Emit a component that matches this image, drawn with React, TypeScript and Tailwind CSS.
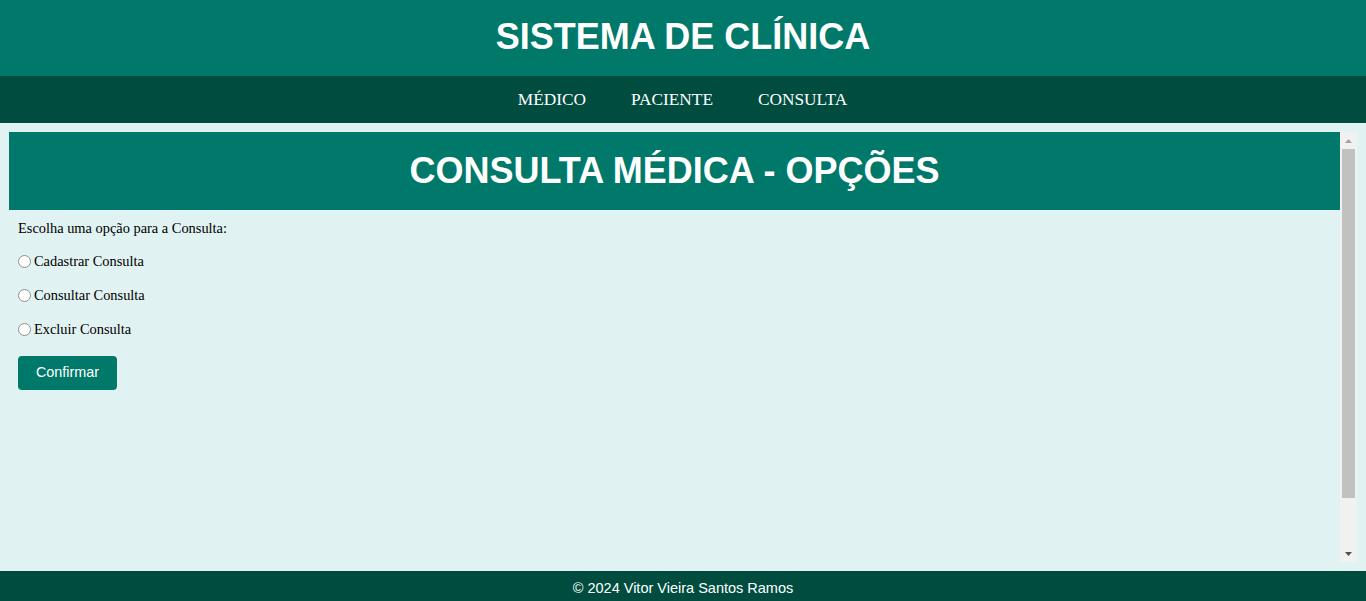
import React from 'react'

const serif = { fontFamily: '"Liberation Serif", "Times New Roman", serif' }

function Opcao({ label }: { label: string }) {
    return (
        <label className="flex items-center h-[20px] text-[14.4px] text-black">
            <span className="w-[13px] h-[13px] rounded-full border border-[#8f8f8f] bg-white mr-[3px] box-border mt-[-2px]" />
            <span>{label}</span>
        </label>
    )
}

function Scrollbar() {
    return (
        <div className="w-[17px] bg-[#f1f1f1] flex flex-col items-center shrink-0">
            <div className="h-[17px] flex items-center justify-center">
                <svg width="7" height="4" viewBox="0 0 7 4"><path d="M3.5 0L7 4H0z" fill="#a3a3a3" /></svg>
            </div>
            <div className="w-[13px] h-[349px] bg-[#c1c1c1]" />
            <div className="flex-1" />
            <div className="h-[17px] flex items-center justify-center">
                <svg width="7" height="4" viewBox="0 0 7 4"><path d="M0 0H7L3.5 4z" fill="#505050" /></svg>
            </div>
        </div>
    )
}

export default function App() {
    return (
        <div className="h-[601px] flex flex-col bg-[#e0f2f1] font-['Liberation_Sans',Arial,sans-serif]">
            <header className="h-[76px] bg-[#00796b] flex items-center justify-center shrink-0">
                <h1 className="text-[36px] font-bold text-white leading-none mt-[-2px]">SISTEMA DE CLÍNICA</h1>
            </header>
            <nav className="h-[47px] bg-[#004d40] flex items-center justify-center gap-[45px] shrink-0 pr-[1px]" style={serif}>
                <a className="text-white text-[17.3px] leading-none">MÉDICO</a>
                <a className="text-white text-[17.3px] leading-none">PACIENTE</a>
                <a className="text-white text-[17.3px] leading-none">CONSULTA</a>
            </nav>
            <main className="flex-1 p-[9px] flex">
                <div className="flex-1 flex">
                    <div className="flex-1 flex flex-col">
                        <div className="h-[78px] bg-[#00796b] flex items-center justify-center">
                            <h2 className="text-[36px] font-bold text-white leading-none">CONSULTA MÉDICA - OPÇÕES</h2>
                        </div>
                        <div className="px-[9px] pt-[8px]" style={serif}>
                            <p className="text-[14.4px] text-black h-[20px] leading-[20px]">Escolha uma opção para a Consulta:</p>
                            <div className="flex flex-col gap-[14px] mt-[14px]">
                                <Opcao label="Cadastrar Consulta" />
                                <Opcao label="Consultar Consulta" />
                                <Opcao label="Excluir Consulta" />
                            </div>
                            <button className="mt-[16px] w-[99px] h-[34px] rounded-[4px] bg-[#00796b] text-white text-[14.4px] font-['Liberation_Sans',Arial,sans-serif]">
                                Confirmar
                            </button>
                        </div>
                    </div>
                    <Scrollbar />
                </div>
            </main>
            <footer className="h-[30px] bg-[#004d40] flex items-center justify-center shrink-0">
                <p className="text-white text-[14.5px] mt-[5px]">© 2024 Vitor Vieira Santos Ramos</p>
            </footer>
        </div>
    )
}
